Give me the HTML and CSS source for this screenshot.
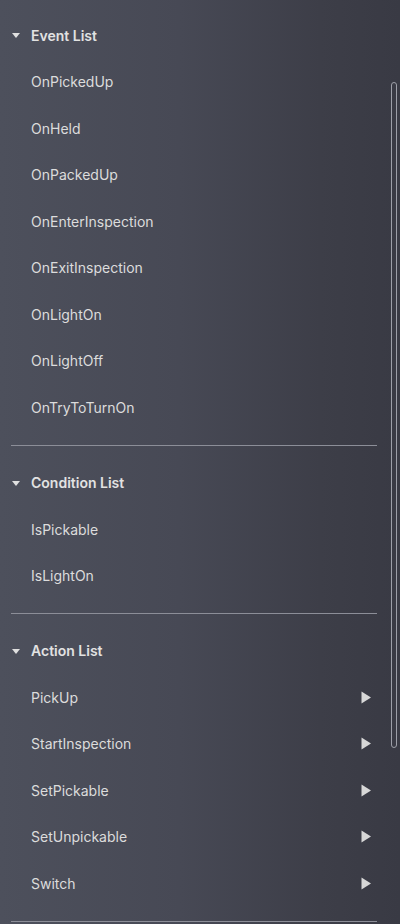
FILE: index.html
```html
<!DOCTYPE html>
<html>
<head>
<meta charset="utf-8">
<link rel="stylesheet" href="styles.css">
</head>
<body>
<div class="panel">
  <section class="group">
    <div class="head"><svg class="caret" viewBox="0 0 8 5" width="8" height="5"><path d="M0 0H8L4 5Z"/></svg><span>Event List</span></div>
    <div class="item">OnPickedUp</div>
    <div class="item">OnHeld</div>
    <div class="item">OnPackedUp</div>
    <div class="item">OnEnterInspection</div>
    <div class="item">OnExitInspection</div>
    <div class="item">OnLightOn</div>
    <div class="item">OnLightOff</div>
    <div class="item">OnTryToTurnOn</div>
  </section>
  <div class="divider"></div>
  <section class="group">
    <div class="head"><svg class="caret" viewBox="0 0 8 5" width="8" height="5"><path d="M0 0H8L4 5Z"/></svg><span>Condition List</span></div>
    <div class="item">IsPickable</div>
    <div class="item">IsLightOn</div>
  </section>
  <div class="divider"></div>
  <section class="group">
    <div class="head"><svg class="caret" viewBox="0 0 8 5" width="8" height="5"><path d="M0 0H8L4 5Z"/></svg><span>Action List</span></div>
    <div class="item action"><span>PickUp</span><svg class="play" viewBox="0 0 10 13" width="10" height="13"><path d="M0.5 0.5L10 6.5L0.5 12.5Z"/></svg></div>
    <div class="item action"><span>StartInspection</span><svg class="play" viewBox="0 0 10 13" width="10" height="13"><path d="M0.5 0.5L10 6.5L0.5 12.5Z"/></svg></div>
    <div class="item action"><span>SetPickable</span><svg class="play" viewBox="0 0 10 13" width="10" height="13"><path d="M0.5 0.5L10 6.5L0.5 12.5Z"/></svg></div>
    <div class="item action"><span>SetUnpickable</span><svg class="play" viewBox="0 0 10 13" width="10" height="13"><path d="M0.5 0.5L10 6.5L0.5 12.5Z"/></svg></div>
    <div class="item action"><span>Switch</span><svg class="play" viewBox="0 0 10 13" width="10" height="13"><path d="M0.5 0.5L10 6.5L0.5 12.5Z"/></svg></div>
  </section>
  <div class="divider"></div>
  <div class="scrollbar"></div>
</div>
</body>
</html>
```

FILE: styles.css
```css
html, body {
  margin: 0;
  padding: 0;
}
body {
  width: 400px;
  height: 924px;
  overflow: hidden;
  background: linear-gradient(90deg, #4d505c 0%, #474955 45%, #3d3e48 80%, #393a44 100%);
  font-family: Inter, "Noto Sans", sans-serif;
  color: #dedede;
}
.panel {
  position: relative;
  height: 924px;
  padding-top: 12px;
  box-sizing: border-box;
}
.group {
  display: flex;
  flex-direction: column;
}
.head {
  height: 46.5px;
  display: flex;
  align-items: center;
  padding-left: 12px;
  font-size: 14px;
  font-weight: 600;
  color: #e2e2e2;
}
.caret {
  fill: #e0e0e0;
  margin-right: 11px;
  margin-top: 1px;
}
.item {
  height: 46.5px;
  display: flex;
  align-items: center;
  padding-left: 31px;
  font-size: 14px;
  font-weight: 400;
  color: #dcdcdc;
}
.action {
  justify-content: space-between;
  padding-right: 29px;
}
.play {
  fill: #d8d8d8;
}
.divider {
  height: 1px;
  margin: 14px 23px 13.75px 11px;
  background: #8c8e98;
}
.scrollbar {
  position: absolute;
  right: 3px;
  top: 82px;
  width: 4px;
  height: 664px;
  border: 1px solid #9d9fa8;
  border-radius: 3px;
}
```
